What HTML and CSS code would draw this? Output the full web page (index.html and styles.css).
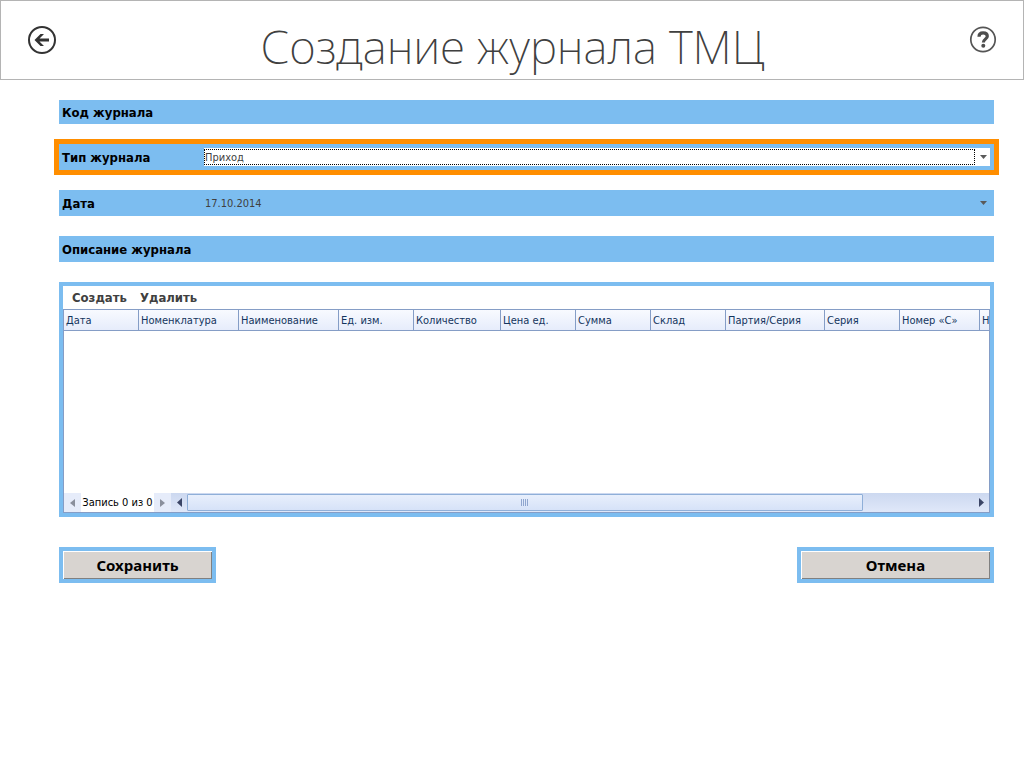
FILE: index.html
```html
<!DOCTYPE html>
<html lang="ru">
<head>
<meta charset="utf-8">
<title>Создание журнала ТМЦ</title>
<link rel="stylesheet" href="styles.css">
</head>
<body>
<header class="header">
  <button class="icon-button" type="button" aria-label="Назад">
    <svg width="28" height="28" viewBox="0 0 28 28"><circle cx="14" cy="14" r="13" fill="none" stroke="#333" stroke-width="2"/><path d="M6.500 14l6-6h3.500l-4.500 4.600h9.500v2.800h-9.500l4.500 4.600h-3.500z" fill="#333"/></svg>
  </button>
  <h1 class="title">Создание журнала ТМЦ</h1>
  <button class="icon-button" type="button" aria-label="Справка">
    <svg width="28" height="28" viewBox="0 0 28 28"><circle cx="14" cy="13.500" r="12.200" fill="none" stroke="#555" stroke-width="1.700"/><path d="M10 10.800c0-2.800 1.800-3.900 4.100-3.900 2.500 0 4.200 1.200 4.200 3.300 0 2.900-3.900 3-3.900 6.200" fill="none" stroke="#4d4d4d" stroke-width="3.200"/><circle cx="14.300" cy="19.800" r="2" fill="#4d4d4d"/></svg>
  </button>
</header>
<main>
  <form class="form">
    <div class="row row-code"><span class="label">Код журнала</span></div>
    <div class="row row-active">
      <label class="label" for="type">Тип журнала</label>
      <div class="combo combo-active">
        <select class="field field-focus" id="type"><option>Приход</option></select>
        <svg class="arrow" width="7" height="4" viewBox="0 0 7 4"><path d="M0 0h7l-3.500 4z"/></svg>
      </div>
    </div>
    <div class="row">
      <label class="label" for="date">Дата</label>
      <div class="combo">
        <input class="field" id="date" type="text" value="17.10.2014">
        <svg class="arrow" width="7" height="4" viewBox="0 0 7 4"><path d="M0 0h7l-3.500 4z"/></svg>
      </div>
    </div>
    <div class="row"><span class="label">Описание журнала</span></div>

    <section class="grid">
      <div class="toolbar">
        <button class="tool" type="button">Создать</button>
        <button class="tool" type="button">Удалить</button>
      </div>
      <div class="sheet">
        <div class="viewport">
          <table class="table">
            <colgroup>
              <col class="col-s"><col class="col-l"><col class="col-l"><col class="col-s"><col class="col-qty"><col class="col-s"><col class="col-s"><col class="col-s"><col class="col-party"><col class="col-s"><col class="col-num"><col class="col-s">
            </colgroup>
            <thead>
              <tr><th>Дата</th><th>Номенклатура</th><th>Наименование</th><th>Ед. изм.</th><th>Количество</th><th>Цена ед.</th><th>Сумма</th><th>Склад</th><th>Партия/Серия</th><th>Серия</th><th>Номер «С»</th><th>Н</th></tr>
            </thead>
          </table>
        </div>
        <div class="navigator">
          <button class="nav" type="button" aria-label="Предыдущая запись"><svg width="5" height="8" viewBox="0 0 5 8"><path d="M5 0v8l-5-4z" fill="#8a8f9c"/></svg></button>
          <span class="record">Запись 0 из 0</span>
          <button class="nav" type="button" aria-label="Следующая запись"><svg width="5" height="8" viewBox="0 0 5 8"><path d="M0 0v8l5-4z" fill="#8a8f9c"/></svg></button>
          <div class="scrollbar">
            <button class="scroll-arrow" type="button" aria-label="Влево"><svg width="5" height="9" viewBox="0 0 5 9"><path d="M5 0v9l-5-4.500z" fill="#3b4566"/></svg></button>
            <div class="track"><div class="thumb"><svg width="8" height="7" viewBox="0 0 8 7"><path d="M.5 0v7M2.500 0v7M4.500 0v7M6.500 0v7" stroke="#8fa6cf"/></svg></div></div>
            <button class="scroll-arrow" type="button" aria-label="Вправо"><svg width="5" height="9" viewBox="0 0 5 9"><path d="M0 0v9l5-4.500z" fill="#3b4566"/></svg></button>
          </div>
        </div>
      </div>
    </section>

    <div class="actions">
      <button class="action action-save" type="button">Сохранить</button>
      <button class="action action-cancel" type="button">Отмена</button>
    </div>
  </form>
</main>
</body>
</html>
```
FILE: styles.css
```css
* { box-sizing: border-box; }

body {
  margin: 0;
  background: #fff;
  color: #404040;
  font: 11px/14px "DejaVu Sans Condensed", "DejaVu Sans", sans-serif;
}

button, input, select {
  margin: 0;
  padding: 0;
  border: 0;
  background: none;
  color: inherit;
  font: inherit;
}

svg { display: block; }

.header {
  display: flex;
  align-items: center;
  justify-content: space-between;
  height: 80px;
  padding: 0 26px 0 27px;
  border: 1px solid #b4b4b4;
}

.title {
  margin: 0;
  padding-top: 12px;
  font: 200 46px/64px "Noto Sans", "Open Sans", sans-serif;
  color: #404040;
}

.form {
  display: flex;
  flex-direction: column;
  gap: 20px;
  padding: 20px 30px 20px 59px;
}

.row {
  display: flex;
  align-items: center;
  min-height: 26px;
  padding: 4px 4px 4px 3px;
  background: #7cbdf0;
}

.row-code {
  min-height: 24px;
  padding: 3px;
}

.row-active {
  outline: 5px solid #ff8e00;
}

.label {
  flex: 0 0 142px;
  padding-top: 2px;
  font: bold 13px/16px "DejaVu Sans Condensed", "DejaVu Sans", sans-serif;
  color: #000;
  white-space: nowrap;
}

.combo {
  display: flex;
  flex: 1;
  align-items: center;
  height: 18px;
}

.combo-active { background: #fff; }

.field {
  flex: 1;
  min-width: 0;
  height: 16px;
  padding-left: 1px;
  appearance: none;
  border-radius: 0;
}

.field-focus {
  padding: 1px 0 0 1px;
  outline: 1px dotted #000;
  outline-offset: -1px;
}

.arrow {
  margin: 0 3px 0 5px;
  fill: #5a5a5a;
}

.grid { border: 4px solid #7cbdf0; }

.toolbar {
  display: flex;
  gap: 13px;
  height: 23px;
  padding-left: 9px;
}

.tool { font: bold 13px/22px "DejaVu Sans Condensed", "DejaVu Sans", sans-serif; }

.sheet { border: 1px solid #859dc6; }

.viewport {
  min-height: 183px;
  overflow: hidden;
}

.table {
  width: 991px;
  table-layout: fixed;
  border-collapse: separate;
  border-spacing: 0;
}

.table th {
  height: 21px;
  padding: 2px 2px 0;
  border: solid #859dc6;
  border-width: 0 1px 1px 0;
  background: linear-gradient(#f8faff, #e6ecfb);
  color: #14355e;
  font-weight: normal;
  text-align: left;
  white-space: nowrap;
}

.col-s { width: 75px; }
.col-l { width: 100px; }
.col-party { width: 99px; }
.col-qty { width: 87px; }
.col-num { width: 80px; }

.navigator {
  display: flex;
  height: 19px;
}

.nav {
  display: flex;
  align-items: center;
  justify-content: center;
  width: 17px;
  background: #e6ecfa;
}

.record {
  width: 73px;
  color: #000;
  line-height: 20px;
  text-align: center;
  white-space: nowrap;
}

.scrollbar {
  display: flex;
  flex: 1;
  background: linear-gradient(#ccd8f0, #e0e8f9);
}

.scroll-arrow {
  display: flex;
  align-items: center;
  justify-content: center;
  width: 16px;
}

.track {
  flex: 1;
  padding: 1px 0;
}

.thumb {
  display: flex;
  align-items: center;
  justify-content: center;
  width: 86%;
  height: 17px;
  border: 1px solid #8fafd8;
  border-radius: 1px;
  background: linear-gradient(#e8effc, #d6e2f8);
}

.actions {
  display: flex;
  justify-content: space-between;
  padding-top: 10px;
}

.action {
  height: 36px;
  border: 4px solid #7cbdf0;
  background: #d8d4d0;
  box-shadow: inset 1px 1px #fff, inset -1px -1px #808080;
  color: #000;
  font: bold 15px/20px "Noto Sans", "Open Sans", sans-serif;
}

.action-save { width: 157px; }
.action-cancel { width: 197px; }
```
